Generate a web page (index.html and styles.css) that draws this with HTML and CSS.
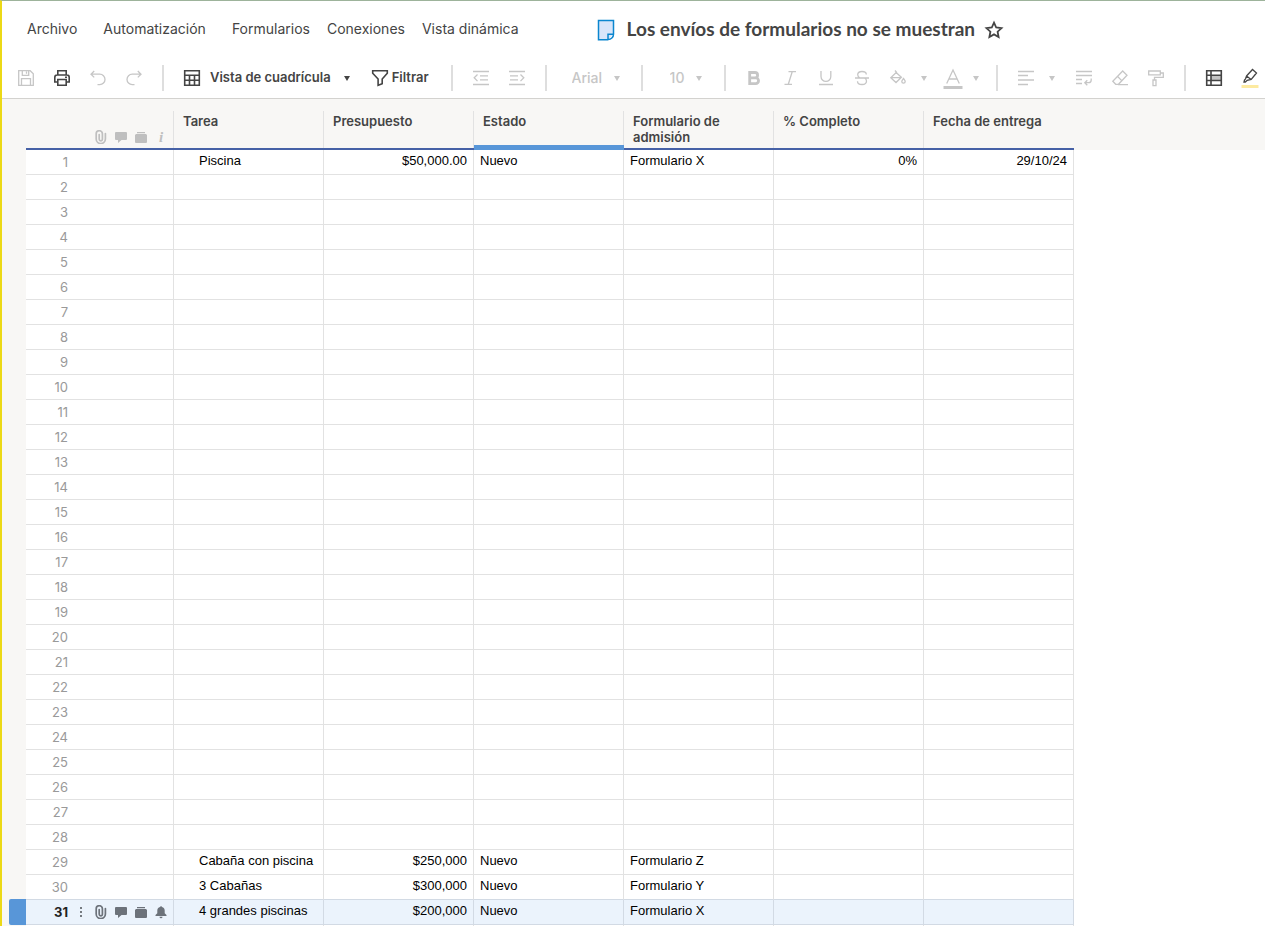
FILE: index.html
```html
<!DOCTYPE html>
<html lang="es">
<head>
<meta charset="utf-8">
<meta name="viewport" content="width=device-width, initial-scale=1">
<title>Los envíos de formularios no se muestran</title>
<link rel="stylesheet" href="styles.css">
</head>
<body>
<svg class="defs" aria-hidden="true">
  <symbol id="caret" viewBox="0 0 8 8"><path d="M1 2h6L4 7z" fill="currentColor"/></symbol>
  <symbol id="clip" viewBox="0 0 14 14"><path d="M5.200 4.500v4.700a1.600 1.600 0 0 0 3.200 0V3.800a2.900 2.900 0 0 0-6.200 0V9a4.600 4.600 0 0 0 9.200 0V3.500" fill="none" stroke="currentColor" stroke-width="1.700" stroke-linecap="round"/></symbol>
  <symbol id="comment" viewBox="0 0 14 14"><path d="M2 2h10a1 1 0 0 1 1 1v6a1 1 0 0 1-1 1H7.500L4 13v-3H2a1 1 0 0 1-1-1V3a1 1 0 0 1 1-1z" fill="currentColor"/></symbol>
  <symbol id="proof" viewBox="0 0 14 14"><path d="M3 2h8v1.300H3zM2 4h10l1 1v7a1 1 0 0 1-1 1H2a1 1 0 0 1-1-1V5z" fill="currentColor"/></symbol>
  <symbol id="bell" viewBox="0 0 14 14"><path d="M7 1.200c.6 0 1 .4 1 .9 1.700.4 2.700 1.700 2.700 3.500v2.600L12.500 10v1H1.500v-1l1.800-1.800V5.600C3.300 3.800 4.300 2.500 6 2.100c0-.5.400-.9 1-.9zM5.500 11.700h3a1.500 1.500 0 0 1-3 0z" fill="currentColor"/></symbol>
</svg>

<header class="topbar">
  <nav class="menu" aria-label="Menú">
    <a class="menu-link wide" href="#">Archivo</a>
    <a class="menu-link wide" href="#">Automatización</a>
    <a class="menu-link" href="#">Formularios</a>
    <a class="menu-link" href="#">Conexiones</a>
    <a class="menu-link" href="#">Vista dinámica</a>
  </nav>
  <div class="doc">
    <svg class="doc-icon" viewBox="0 0 18 22" aria-hidden="true"><path d="M1.500 1.500h15v13l-5 6h-10z" fill="#d8e5fa"/><path d="M16.500 15V1.500h-15v19.300h9.700M11 20.500v-5.300h5.500a5.300 5.300 0 0 1-5.500 5.300z" fill="none" stroke="#0b86cf" stroke-width="1.500"/></svg>
    <h1 class="doc-title">Los envíos de formularios no se muestran</h1>
    <button class="star" type="button" aria-label="Favorito"><svg viewBox="0 0 20 20"><path d="M10 2.600l2.200 4.900 5.300.6-3.900 3.600 1 5.300L10 14.400 5.400 17l1-5.300-3.900-3.600 5.300-.6z" fill="none" stroke="currentColor" stroke-width="1.800" stroke-linejoin="miter"/></svg></button>
  </div>
</header>

<div class="toolbar" role="toolbar" aria-label="Herramientas">
  <div class="group">
    <button class="tool off" type="button" aria-label="Guardar"><svg viewBox="0 0 20 20"><path d="M2.700 2.700h11.500l3.100 3.100v11.500H2.700zM6.300 2.700v4.600h6.400V2.700M5.500 17.300v-6.600h9v6.600M10.500 3.500v2.300"/></svg></button>
    <button class="tool" type="button" aria-label="Imprimir"><svg viewBox="0 0 20 20" class="bold"><path d="M5.800 7V2.800h8.400V7M5.500 14H2.800V9.500Q2.800 7 5 7h10q2.200 0 2.200 2.500V14h-2.700M5.800 11.500h8.400v5.700H5.800zM13 9.200h2"/></svg></button>
    <button class="tool off" type="button" aria-label="Deshacer"><svg viewBox="0 0 20 20"><path d="M6.200 3L3 6.200l3.200 3.200M3 6.200h8.800a5.200 5.200 0 0 1 0 10.400H9.500"/></svg></button>
    <button class="tool off" type="button" aria-label="Rehacer"><svg viewBox="0 0 20 20"><path d="M13.800 3L17 6.200l-3.200 3.200M17 6.200H8.200a5.200 5.200 0 0 0 0 10.400h2.300"/></svg></button>
  </div>
  <div class="group">
    <button class="tool labelled" type="button"><span class="tool-icon"><svg viewBox="0 0 20 20" class="bold"><path d="M2.700 2.700h14.600v14.600H2.700zM2.700 7.200h14.600M2.700 12.200h14.600M7.500 7.200v10M12.500 7.200v10"/></svg></span><span class="label">Vista de cuadrícula</span><svg class="caret"><use href="#caret"/></svg></button>
    <button class="tool labelled filter" type="button"><svg viewBox="0 0 20 20" class="bold"><path d="M2.700 2.800h14.600v2.400L12.200 11v4.800l-4.100 1.500V11L2.700 5.200z"/></svg><span class="label">Filtrar</span></button>
  </div>
  <div class="group">
    <button class="tool off" type="button" aria-label="Reducir sangría"><svg viewBox="0 0 20 20"><path d="M2 3.500h16M9 7.800h8M9 11.800h8M2 16.500h16M6.500 6.500L3.200 9.800l3.300 3.300"/></svg></button>
    <button class="tool off" type="button" aria-label="Aumentar sangría"><svg viewBox="0 0 20 20"><path d="M2 3.500h16M3 7.800h8M3 11.800h8M2 16.500h16M13.500 6.500l3.300 3.300-3.300 3.300"/></svg></button>
  </div>
  <div class="group">
    <label class="picker"><select class="picker-select" aria-label="Fuente" disabled><option>Arial</option></select><svg class="caret"><use href="#caret"/></svg></label>
  </div>
  <div class="group">
    <label class="picker size"><select class="picker-select" aria-label="Tamaño" disabled><option>10</option></select><svg class="caret"><use href="#caret"/></svg></label>
  </div>
  <div class="group">
    <button class="tool off" type="button" aria-label="Negrita"><svg viewBox="0 0 20 20"><path d="M5.700 4.500h5.200a2.600 2.600 0 0 1 0 5.400H5.700zM5.700 9.900h6a2.800 2.800 0 0 1 0 5.700h-6z" class="heavy"/></svg></button>
    <button class="tool off" type="button" aria-label="Cursiva"><svg viewBox="0 0 20 20"><path d="M8.500 3.700H16M4.500 16.300h7.500M12.200 3.700L8.300 16.300"/></svg></button>
    <button class="tool off" type="button" aria-label="Subrayado"><svg viewBox="0 0 20 20"><path d="M5 3v5.500a4.900 4.900 0 0 0 9.800 0V3M3 16.500h14"/></svg></button>
    <button class="tool off" type="button" aria-label="Tachado"><svg viewBox="0 0 20 20"><path d="M14.300 6.500C14.300 4.300 12.500 3.500 10 3.500S5.700 4.600 5.700 6.800c0 1.700 1 2.500 2.300 3.200M3 10h14M12.500 10c1.400.7 2 1.600 2 3 0 2.300-1.800 3.500-4.500 3.500s-4.500-1.200-4.500-3.300"/></svg></button>
    <button class="tool off" type="button" aria-label="Color de fondo"><svg viewBox="0 0 20 20"><path d="M7 2.500l1.500 1.700L2.800 9.700l5.200 4.800 5.400-5.200L7.500 4M3.200 9.700h10.200M15.500 10.500c-1 1.300-1.700 2-1.700 3a1.700 1.700 0 0 0 3.400 0c0-1-.7-1.700-1.700-3z"/></svg></button>
    <button class="tool drop off" type="button" aria-label="Colores de fondo"><svg class="caret"><use href="#caret"/></svg></button>
    <button class="tool narrow off" type="button" aria-label="Color de texto"><svg viewBox="0 0 20 24"><path d="M3.700 17.500L10 4l6.300 13.500M6 13h8"/><path d="M.5 20h19v3H.5z" class="solid"/></svg></button>
    <button class="tool drop off text-colors" type="button" aria-label="Colores de texto"><svg class="caret"><use href="#caret"/></svg></button>
  </div>
  <div class="group">
    <button class="tool off" type="button" aria-label="Alinear"><svg viewBox="0 0 20 20"><path d="M2 3.500h16M2 7.500h10M2 12h16M2 16.500h10"/></svg></button>
    <button class="tool drop off align-options" type="button" aria-label="Opciones de alineación"><svg class="caret"><use href="#caret"/></svg></button>
    <button class="tool off" type="button" aria-label="Ajustar texto"><svg viewBox="0 0 20 20"><path d="M2 3.500h16M2 7.500h16M2 11.500h6M2 15.500h6M17.200 10.500v1.500q0 2.700-2.500 2.700H11M13.300 12.200l-2.500 2.500 2.500 2.500"/></svg></button>
    <button class="tool off" type="button" aria-label="Borrar formato"><svg viewBox="0 0 20 20"><path d="M12.700 3L17 7.300 8.500 16.300H5.700L2.800 13.200zM7.400 8.300l4.800 4.800M8 16.700h10"/></svg></button>
    <button class="tool off" type="button" aria-label="Copiar formato"><svg viewBox="0 0 20 20"><path d="M2.700 3h11.600v3.800H2.700zM14.300 5h3v4.300H8.500v2.500M7 12h3v5.700H7z"/></svg></button>
  </div>
  <div class="group">
    <button class="tool" type="button" aria-label="Formato condicional"><svg viewBox="0 0 20 20"><path d="M7 7h10.500v5.500H7z" class="shade"/><path d="M2.700 2.700h14.600v14.600H2.700zM2.700 7.300h14.600M2.700 12.500h14.600M7 2.700v14.600" class="thick"/></svg></button>
    <button class="tool" type="button" aria-label="Resaltar cambios"><svg viewBox="0 0 20 24"><path d="M6.500 10L12.500 3.500l4 3.500-5.300 6.500-4 .8-1.900 1.700H4l.5-2 1-1.200zM6.500 10l4.700 3.500"/><path d="M1.500 19h17v3h-17z" class="marker"/></svg></button>
  </div>
</div>

<main class="sheet">
  <table class="grid">
    <colgroup><col class="col-row"><col class="col"><col class="col"><col class="col"><col class="col"><col class="col"><col class="col"></colgroup>
    <thead>
      <tr>
        <th scope="col"><div class="marks"><svg><use href="#clip"/></svg><svg><use href="#comment"/></svg><svg><use href="#proof"/></svg><i class="info">i</i></div></th>
        <th scope="col"><div class="head">Tarea</div></th>
        <th scope="col"><div class="head">Presupuesto</div></th>
        <th scope="col" class="active"><div class="head">Estado</div></th>
        <th scope="col"><div class="head">Formulario de admisión</div></th>
        <th scope="col"><div class="head">% Completo</div></th>
        <th scope="col"><div class="head">Fecha de entrega</div></th>
      </tr>
    </thead>
    <tbody id="rows"></tbody>
  </table>
</main>
<script src="rows.js"></script>
</body>
</html>
```
FILE: styles.css
```css
* { box-sizing: border-box; }

body {
  margin: 0;
  height: 100vh;
  display: flex;
  flex-direction: column;
  overflow: hidden;
  border-top: 1px solid #9db39b;
  border-left: 2px solid #ecd916;
  background: #fff;
  color: #444;
  font-family: Inter, "Liberation Sans", sans-serif;
  font-size: 13px;
}

button {
  padding: 0;
  border: 0;
  background: none;
  color: inherit;
  font: inherit;
}

.defs { display: none; }

.topbar {
  display: flex;
  align-items: center;
  flex: none;
  height: 57px;
  padding-left: 25px;
}

.menu {
  display: flex;
  gap: 17px;
}

.menu-link {
  padding-bottom: 2px;
  color: #444;
  font-size: 14px;
  line-height: 20px;
  text-decoration: none;
  white-space: nowrap;
}

.wide { margin-right: 9px; }

.doc {
  display: flex;
  align-items: center;
  margin-left: 78px;
}

.doc-icon {
  width: 18px;
  height: 22px;
  margin-right: 12px;
}

.doc-title {
  margin: 0;
  padding-bottom: 2px;
  font-family: Lato, "Open Sans", sans-serif;
  font-size: 19px;
  font-weight: 700;
  line-height: 24px;
  white-space: nowrap;
}

.star {
  display: flex;
  margin-left: 9px;
}

.star svg {
  width: 20px;
  height: 20px;
}

.toolbar {
  display: flex;
  align-items: center;
  flex: none;
  height: 41px;
  padding-left: 6px;
  border-bottom: 1px solid #d3d2cf;
  overflow: hidden;
}

.group {
  display: flex;
  align-items: center;
  flex: none;
}

.group + .group::before {
  content: "";
  width: 2px;
  height: 26px;
  margin: 0 10px;
  background: #dedede;
}

.tool {
  display: flex;
  align-items: center;
  justify-content: center;
  width: 36px;
  height: 40px;
  color: #444;
}

.tool svg:not(.caret) {
  width: 20px;
  flex: none;
  overflow: visible;
}

.tool path {
  fill: none;
  stroke: currentColor;
  stroke-width: 1.3;
}

.tool .bold path,
.tool .thick { stroke-width: 1.6; }
.tool .heavy { stroke-width: 2.8; }
.tool .solid { fill: currentColor; stroke: none; }
.tool .shade { fill: #c4c4c4; stroke: none; }
.tool .marker { fill: #fdeaa0; stroke: none; }

.off { color: #c6c6c6; }
.drop { width: 16px; }

.narrow {
  width: 30px;
  margin-left: 6px;
}

.text-colors { margin-right: 2px; }
.align-options { margin-right: 6px; }

.labelled {
  width: auto;
  font-weight: 600;
  white-space: nowrap;
}

.label { padding-bottom: 2px; }

.tool-icon {
  display: flex;
  justify-content: center;
  width: 36px;
}

.labelled .caret { margin-left: 12px; }

.filter {
  margin: 0 12px 0 19px;
  gap: 2px;
}

.caret {
  width: 8px;
  height: 8px;
  flex: none;
}

.picker {
  display: flex;
  align-items: center;
  gap: 10px;
  padding: 0 10px 0 15px;
  color: #c6c6c6;
}

.picker.size { padding: 0 11px 0 17px; }

.picker-select {
  appearance: none;
  padding: 0 0 2px;
  border: 0;
  background: none;
  color: #c6c6c6;
  opacity: 1;
  font: 500 14px Inter, sans-serif;
}

.sheet {
  flex: 1;
  min-height: 0;
  overflow: hidden;
  padding-left: 24px;
  background: linear-gradient(#f8f7f5, #f8f7f5) 0 0 / 24px 100% no-repeat,
    linear-gradient(#f8f7f5, #f8f7f5) 0 0 / 100% 51px no-repeat;
}

.grid {
  width: 1048px;
  table-layout: fixed;
  border-collapse: separate;
  border-spacing: 0;
}

.col-row { width: 148px; }
.col { width: 150px; }

thead th {
  height: 51px;
  padding: 12px 0 0;
  border-bottom: 2px solid #4661a6;
  text-align: left;
  vertical-align: top;
}

thead th.active { border-bottom: 5px solid #5896d8; }

.head {
  height: 37px;
  padding: 2px 20px 0 9px;
  border-right: 1px solid #e2e2e2;
  font-weight: 600;
  line-height: 16px;
}

.active .head { height: 34px; }

thead th:last-child .head { border-right: 0; }

.marks {
  display: flex;
  align-items: flex-end;
  gap: 6px;
  height: 37px;
  padding: 0 0 4px 68px;
  border-right: 1px solid #e2e2e2;
  color: #bfbfbf;
}

.marks svg,
.tags svg {
  width: 14px;
  height: 14px;
}

.info {
  width: 14px;
  font: italic 700 15px/14px "Liberation Serif", serif;
  text-align: center;
}

tbody th,
tbody td {
  height: 25px;
  border-right: 1px solid #e2e2e2;
  border-bottom: 1px solid #e2e2e2;
}

tbody th {
  position: relative;
  padding: 0;
  color: #999;
  font-weight: 400;
}

.row-head {
  display: flex;
  align-items: center;
  height: 24px;
}

.number {
  width: 42px;
  text-align: right;
}

tbody td {
  padding: 1px 6px 0;
  color: #000;
  font: 13px/20px "Liberation Sans", Arial, sans-serif;
  vertical-align: top;
  white-space: nowrap;
}

tbody td.task { padding-left: 25px; }
tbody td.right { text-align: right; }

.selected th,
.selected td {
  border-color: #d2dae4;
  background: #ebf3fc;
}

.before th,
.before td { border-bottom-color: #d2dae4; }

.selected th { color: #222; }
.selected .number { font-weight: 700; }

.handle {
  position: absolute;
  top: -1px;
  right: 100%;
  width: 17px;
  height: 26px;
  border-radius: 2px 0 0 2px;
  background: #5896d8;
}

.dots {
  width: 4px;
  height: 12px;
  margin: 0 8px 0 11px;
  fill: #757a80;
}

.tags {
  display: flex;
  gap: 6px;
  padding-left: 3px;
  color: #6c727a;
}
```
FILE: rows.js
```javascript
const data = {
  1: ["Piscina", "$50,000.00", "Nuevo", "Formulario X", "0%", "29/10/24"],
  29: ["Cabaña con piscina", "$250,000", "Nuevo", "Formulario Z", "", ""],
  30: ["3 Cabañas", "$300,000", "Nuevo", "Formulario Y", "", ""],
  31: ["4 grandes piscinas", "$200,000", "Nuevo", "Formulario X", "", ""]
};
const kinds = ["task", "right", "", "", "right", "right"];
const selected = 31;
const icon = (name) => `<svg><use href="#${name}"/></svg>`;
const tools = `<svg class="dots" viewBox="0 0 4 12"><path d="M1 1h2v2H1zM1 5h2v2H1zM1 9h2v2H1z"/></svg>` +
  `<span class="tags">${["clip", "comment", "proof", "bell"].map(icon).join("")}</span><span class="handle"></span>`;

let html = "";
for (let n = 1; n <= selected; n++) {
  const cells = data[n] || ["", "", "", "", "", ""];
  const state = n === selected ? "selected" : n === selected - 1 ? "before" : "";
  html += `<tr class="${state}"><th scope="row"><div class="row-head"><span class="number">${n}</span>${n === selected ? tools : ""}</div></th>` +
    cells.map((text, i) => `<td class="${kinds[i]}">${text}</td>`).join("") + "</tr>";
}
html += "<tr><th></th>" + "<td></td>".repeat(6) + "</tr>";
document.getElementById("rows").innerHTML = html;
```
